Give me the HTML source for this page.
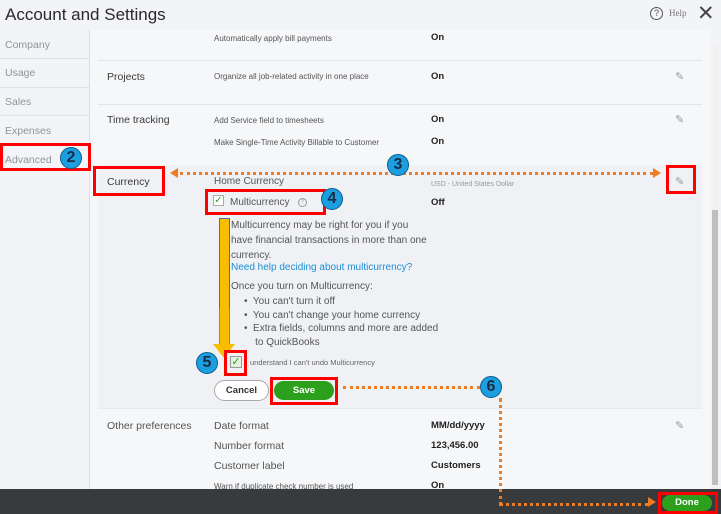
<!DOCTYPE html>
<html><head><meta charset="utf-8"><style>
*{margin:0;padding:0;box-sizing:border-box}
body{width:721px;height:514px;overflow:hidden;background:#f3f4f7;font-family:"Liberation Sans",sans-serif;position:relative;color:#444}
.a{position:absolute;white-space:nowrap}
.sb{color:#8f9499;font-size:10.5px;left:5px}
.sep{position:absolute;left:0;width:89px;height:1px;background:#dcdfe3}
.hl{position:absolute;left:98px;width:604px;height:1px;background:#e3e5e8}
.s{font-size:8px;color:#555}
.lbl{font-size:10.5px;color:#3a3a3a}
.v{font-size:9.5px;color:#222;font-weight:bold}
.rb{position:absolute;border:3px solid #f00}
.c{position:absolute;width:22px;height:22px;border-radius:50%;background:#1c9fe0;border:1.5px solid #0c5c8a;color:#1a2a44;font-weight:bold;font-size:16px;text-align:center;line-height:19px}
.t{font-size:10px;color:#555}
.dh{position:absolute;height:0;border-top:3px dotted #ef7b22}
.dv{position:absolute;width:0;border-left:3px dotted #ef7b22}
</style></head><body>
<div class="a" style="left:5px;top:5px;font-size:17px;color:#2a2a2a">Account and Settings</div>
<div class="a" style="left:650px;top:7px;width:13px;height:13px;border:1.2px solid #555;border-radius:50%;font-size:9px;text-align:center;line-height:11px;color:#555">?</div>
<div class="a" style="left:669px;top:8px;font-size:9px;color:#777;font-family:'Liberation Serif',serif">Help</div>
<div class="a" style="left:697px;top:1px;font-size:21px;color:#444">✕</div>
<div class="a" style="left:89px;top:30px;width:1px;height:460px;background:#dcdfe3"></div>
<div class="a" style="left:90px;top:30px;width:620px;height:460px;background:#f6f7f9"></div>
<div class="a" style="left:98px;top:165px;width:604px;height:243px;background:#eff1f5"></div>
<div class="a" style="left:711px;top:44px;width:8px;height:446px;background:#f1f1f1"></div>
<div class="a" style="left:712px;top:210px;width:6px;height:275px;background:#bfbfbf"></div>
<div class="a sb" style="top:39px">Company</div><div class="sep" style="top:58px"></div>
<div class="a sb" style="top:67px">Usage</div><div class="sep" style="top:87px"></div>
<div class="a sb" style="top:96px">Sales</div><div class="sep" style="top:115px"></div>
<div class="a sb" style="top:125px">Expenses</div><div class="sep" style="top:144px"></div>
<div class="a sb" style="top:154px">Advanced</div>
<div class="rb" style="left:0;top:143px;width:91px;height:28px"></div>
<div class="c" style="left:60px;top:147px">2</div>
<div class="a s" style="left:214px;top:34px">Automatically apply bill payments</div><div class="a v" style="left:431px;top:32px">On</div>
<div class="hl" style="top:60px"></div>
<div class="a lbl" style="left:107px;top:71px">Projects</div>
<div class="a s" style="left:214px;top:72px">Organize all job-related activity in one place</div><div class="a v" style="left:431px;top:71px">On</div>
<div class="a" style="left:675px;top:70px;color:#999;font-size:11px">✎</div>
<div class="hl" style="top:104px"></div>
<div class="a lbl" style="left:107px;top:114px">Time tracking</div>
<div class="a s" style="left:214px;top:116px">Add Service field to timesheets</div><div class="a v" style="left:431px;top:114px">On</div>
<div class="a" style="left:675px;top:113px;color:#999;font-size:11px">✎</div>
<div class="a s" style="left:214px;top:138px">Make Single-Time Activity Billable to Customer</div><div class="a v" style="left:431px;top:136px">On</div>
<div class="a lbl" style="left:107px;top:176px">Currency</div>
<div class="rb" style="left:93px;top:166px;width:72px;height:30px"></div>
<div class="a t" style="left:214px;top:176px">Home Currency</div>
<div class="a" style="left:431px;top:181px;font-size:7px;color:#999">USD - United States Dollar</div>
<div class="a" style="left:675px;top:175px;color:#999;font-size:11px">✎</div>
<div class="rb" style="left:666px;top:165px;width:30px;height:29px"></div>
<div class="dh" style="left:180px;top:172px;width:473px"></div>
<div class="a" style="left:170px;top:168px;width:0;height:0;border-top:5px solid transparent;border-bottom:5px solid transparent;border-right:8px solid #ef7b22"></div>
<div class="a" style="left:653px;top:168px;width:0;height:0;border-top:5px solid transparent;border-bottom:5px solid transparent;border-left:8px solid #ef7b22"></div>
<div class="c" style="left:387px;top:154px">3</div>
<div class="a" style="left:213px;top:195px;width:11px;height:11px;border:1px solid #aaa;background:#fff;color:#2ca01c;font-size:10px;line-height:9px;text-align:center">✓</div>
<div class="a t" style="left:230px;top:197px">Multicurrency</div>
<div class="a" style="left:298px;top:198px;width:9px;height:9px;border:1px solid #999;border-radius:50%;font-size:6px;text-align:center;line-height:7px;color:#999">?</div>
<div class="rb" style="left:205px;top:189px;width:121px;height:26px"></div>
<div class="c" style="left:321px;top:188px">4</div>
<div class="a v" style="left:431px;top:197px">Off</div>
<div class="a t" style="left:231px;top:218px;line-height:15px;white-space:normal;width:197px">Multicurrency may be right for you if you have financial transactions in more than one currency.</div>
<div class="a" style="left:231px;top:262px;font-size:10px;color:#1e8fd6">Need help deciding about multicurrency?</div>
<div class="a t" style="left:231px;top:281px">Once you turn on Multicurrency:</div>
<div class="a t" style="left:244px;top:295px;line-height:13.5px;white-space:normal;width:200px">•&nbsp; You can't turn it off<br>•&nbsp; You can't change your home currency<br>•&nbsp; Extra fields, columns and more are added<br>&nbsp;&nbsp;&nbsp; to QuickBooks</div>
<div class="a" style="left:219px;top:302px;width:11px;height:44px;background:#f9bd00;border:1px solid #a98a20"></div>
<div class="a" style="left:219px;top:218px;width:11px;height:90px;background:#f9bd00;border:1px solid #4a6fa5;border-bottom:none"></div>
<div class="a" style="left:213px;top:344px;width:0;height:0;border-left:11px solid transparent;border-right:11px solid transparent;border-top:14px solid #f9bd00"></div>
<div class="a" style="left:230px;top:356px;width:12px;height:12px;border:1px solid #999;background:#e4f0e0;color:#2ca01c;font-size:11px;line-height:10px;text-align:center">✓</div>
<div class="rb" style="left:224px;top:350px;width:23px;height:26px"></div>
<div class="c" style="left:196px;top:352px">5</div>
<div class="a" style="left:250px;top:358px;font-size:7.5px;color:#666">understand I can't undo Multicurrency</div>
<div class="a" style="left:214px;top:380px;width:55px;height:21px;border:1px solid #aaa;border-radius:11px;background:#fff;font-size:9.5px;font-weight:bold;color:#333;text-align:center;line-height:19px">Cancel</div>
<div class="a" style="left:274px;top:381px;width:60px;height:19px;border-radius:10px;background:#2ca01c;font-size:9.5px;font-weight:bold;color:#fff;text-align:center;line-height:19px">Save</div>
<div class="rb" style="left:270px;top:377px;width:68px;height:28px"></div>
<div class="dh" style="left:343px;top:386px;width:137px"></div>
<div class="c" style="left:480px;top:376px">6</div>
<div class="dv" style="left:499px;top:398px;height:108px"></div>
<div class="hl" style="top:408px;background:#e8eaed"></div>
<div class="a lbl" style="left:107px;top:420px;color:#555">Other preferences</div>
<div class="a t" style="left:214px;top:420px;font-size:10.5px">Date format</div><div class="a v" style="left:431px;top:420px">MM/dd/yyyy</div>
<div class="a" style="left:675px;top:419px;color:#999;font-size:11px">✎</div>
<div class="a t" style="left:214px;top:440px;font-size:10.5px">Number format</div><div class="a v" style="left:431px;top:440px">123,456.00</div>
<div class="a t" style="left:214px;top:460px;font-size:10.5px">Customer label</div><div class="a v" style="left:431px;top:460px">Customers</div>
<div class="a s" style="left:214px;top:482px">Warn if duplicate check number is used</div><div class="a v" style="left:431px;top:480px">On</div>
<div class="a" style="left:0;top:489px;width:721px;height:25px;background:#393a3c;z-index:2"></div>
<div class="dv" style="left:499px;top:489px;height:16px;z-index:3"></div>
<div class="dh" style="left:499px;top:503px;width:150px;z-index:3"></div>
<div class="a" style="left:648px;top:497px;width:0;height:0;border-top:5px solid transparent;border-bottom:5px solid transparent;border-left:8px solid #ef7b22;z-index:3"></div>
<div class="a" style="left:662px;top:495px;width:50px;height:16px;border-radius:8px;background:#2ca01c;color:#fff;font-weight:bold;font-size:9.5px;text-align:center;line-height:16px;z-index:3">Done</div>
<div class="rb" style="left:658px;top:492px;width:60px;height:22px;z-index:4"></div>
</body></html>
